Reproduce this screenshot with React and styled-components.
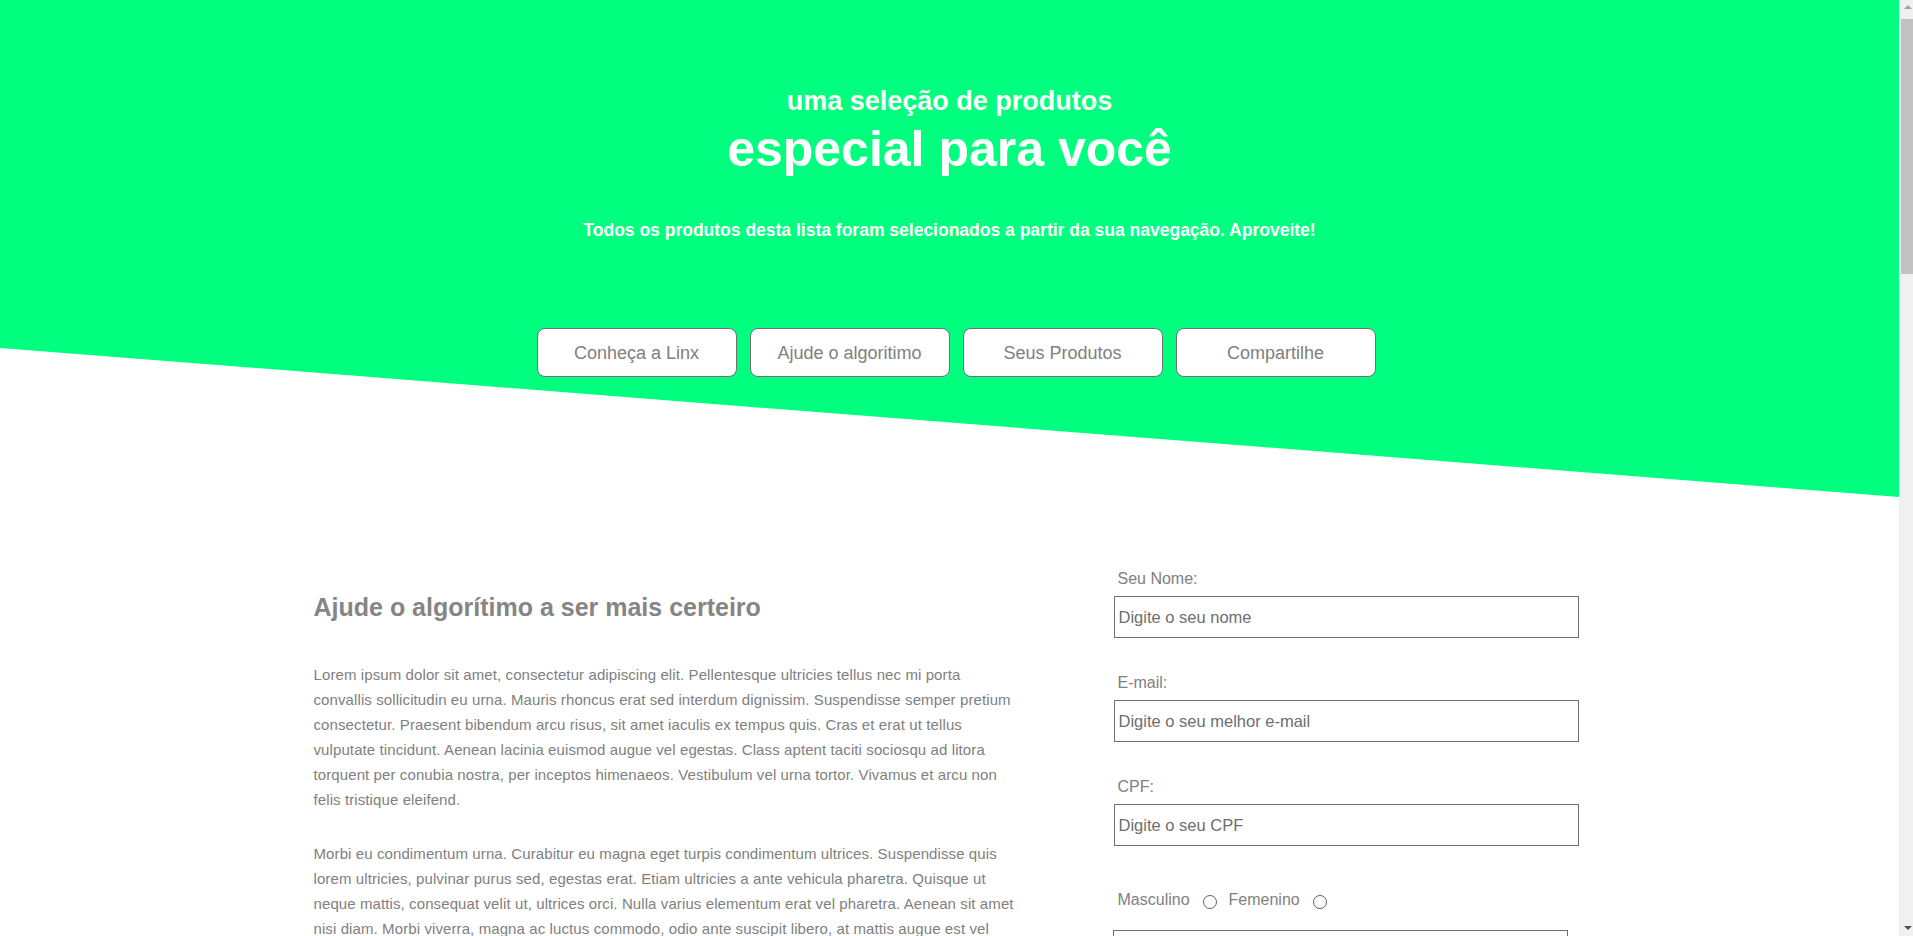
import React, { useEffect, useRef, useState } from 'react';
import styled, { createGlobalStyle } from 'styled-components';

const GlobalStyle = createGlobalStyle`
    * {
        box-sizing: border-box;
    }
    body {
        margin: 0;
        overflow: hidden;
        font-family: "Liberation Sans", Arial, sans-serif;
        background: #fff;
    }
`;

const Page = styled.div`
    display: flex;
    height: 100vh;
`;

const Scroller = styled.div`
    flex: 1;
    min-width: 0;
    overflow-y: auto;
    scrollbar-width: none;
    &::-webkit-scrollbar {
        display: none;
    }
`;

const Rail = styled.div`
    display: flex;
    flex-direction: column;
    flex-shrink: 0;
    width: 14px;
    background: #f0f0f0;
`;

const RailButton = styled.div`
    display: flex;
    align-items: center;
    justify-content: center;
    height: 17px;
    padding-left: 4px;
    &::before {
        content: '';
        border-left: 4px solid transparent;
        border-right: 4px solid transparent;
        ${props => props.down
            ? 'border-top: 4px solid #505050;'
            : 'border-bottom: 4px solid #a3a3a3; margin-top: -3px;'}
    }
`;

const Track = styled.div`
    flex: 1;
    padding-top: 2px;
`;

const Thumb = styled.div`
    width: 12px;
    margin-left: 2px;
    background: #c1c1c1;
`;

const Header = styled.header`
    height: 497px;
    background-color: #00ff7f;
    clip-path: polygon(0 0, 100% 0, 100% 100%, 0 70%);
    display: flex;
    flex-direction: column;
    align-items: center;
    color: #fff;
    text-align: center;
`;

const Kicker = styled.h3`
    margin: 86px 0 0;
    font-size: 27px;
    line-height: 30px;
    font-weight: bold;
`;

const Title = styled.h1`
    margin: 5px 0 0;
    font-size: 50px;
    line-height: 56px;
    font-weight: bold;
`;

const Lead = styled.p`
    margin: 43px 0 0;
    font-size: 17.5px;
    line-height: 20px;
    font-weight: bold;
`;

const Nav = styled.nav`
    display: flex;
    margin-top: 88px;
`;

const NavButton = styled.a`
    display: flex;
    align-items: center;
    justify-content: center;
    width: 200px;
    height: 49px;
    margin-left: 13px;
    padding-top: 2px;
    background: #fff;
    border: 1px solid #707070;
    border-radius: 8px;
    color: #808080;
    font-size: 18px;
    text-decoration: none;
    cursor: pointer;
`;

const Main = styled.main`
    display: grid;
    grid-template-columns: 700px 472px;
    column-gap: 100px;
    width: 1272px;
    margin: 0 auto;
    padding-top: 73px;
    align-items: start;
`;

const Article = styled.article`
    color: #808080;
`;

const Heading = styled.h2`
    margin: 22px 0 0;
    font-size: 25px;
    line-height: 30px;
    font-weight: bold;
    color: #858585;
`;

const Text = styled.p`
    width: 705px;
    margin: ${props => props.first ? '40px' : '29px'} 0 0;
    font-size: 15px;
    letter-spacing: 0.1px;
    line-height: 25px;
`;

const Form = styled.form`
    display: flex;
    flex-direction: column;
`;

const Field = styled.div`
    display: flex;
    flex-direction: column;
    margin-bottom: 36px;
`;

const Label = styled.label`
    padding-left: 4px;
    font-size: 16px;
    line-height: 18px;
    color: #808080;
    margin-bottom: 8px;
`;

const Input = styled.input`
    width: 465px;
    height: 42px;
    padding: 0 4px;
    border: 1px solid #707070;
    border-radius: 0;
    font-family: "Liberation Sans", Arial, sans-serif;
    font-size: 16.5px;
    color: #555;
    outline: none;
    &::placeholder {
        color: #6e6e6e;
    }
`;

const RadioRow = styled.div`
    display: flex;
    align-items: center;
    padding-left: 4px;
    margin-top: 9px;
    font-size: 16px;
    line-height: 18px;
    color: #808080;
`;

const Radio = styled.input.attrs({ type: 'radio' })`
    appearance: none;
    width: 14px;
    height: 14px;
    margin: 4px 12px 0 13px;
    border: 1px solid #606060;
    border-radius: 50%;
    background: #fff;
    &:checked {
        background: radial-gradient(circle, #606060 40%, #fff 45%);
    }
`;

const Message = styled.textarea`
    width: 455px;
    height: 140px;
    margin: 21px 0 0 -1px;
    border: 1px solid #707070;
    padding: 6px;
    font-family: "Liberation Sans", Arial, sans-serif;
    font-size: 16px;
    resize: none;
`;

const Submit = styled.button`
    width: 200px;
    height: 49px;
    margin-top: 24px;
    background: #fff;
    border: 1px solid #707070;
    border-radius: 8px;
    color: #808080;
    font-family: "Liberation Sans", Arial, sans-serif;
    font-size: 18px;
`;

const Products = styled.section`
    width: 1272px;
    margin: 120px auto 0;
    padding-bottom: 120px;
`;

const ProductsTitle = styled.h2`
    margin: 0 0 40px;
    font-size: 25px;
    color: #858585;
    text-align: center;
`;

const Grid = styled.div`
    display: grid;
    grid-template-columns: repeat(4, 1fr);
    gap: 40px 24px;
`;

const Card = styled.div`
    display: flex;
    flex-direction: column;
    gap: 8px;
    color: #808080;
    font-size: 14px;
`;

const Picture = styled.div`
    height: 260px;
    background: #eaeaea;
    border-radius: 4px;
`;

const Name = styled.h4`
    margin: 6px 0 0;
    font-size: 16px;
    color: #666;
`;

const OldPrice = styled.span`
    text-decoration: line-through;
    font-size: 13px;
`;

const Price = styled.strong`
    font-size: 20px;
    color: #555;
`;

const Buy = styled.button`
    height: 40px;
    background: #fff;
    border: 1px solid #707070;
    border-radius: 8px;
    color: #808080;
    font-size: 16px;
`;

const products = Array.from({ length: 16 }, (_, i) => ({
    id: i + 1,
    name: `Nome do Produto ${i + 1}`,
    description: 'Descrição do produto. Lorem ipsum dolor sit amet, consectetur adipiscing elit.',
    oldPrice: 'De: R$ 23,99',
    price: 'Por: R$ 19,99',
}));

const App = () => {
    const scrollRef = useRef(null);
    const trackRef = useRef(null);
    const [thumb, setThumb] = useState({ top: 0, size: 0 });

    useEffect(() => {
        const el = scrollRef.current;
        const update = () => {
            const track = trackRef.current.clientHeight - 2;
            const size = Math.max(20, track * el.clientHeight / el.scrollHeight);
            const range = el.scrollHeight - el.clientHeight;
            const top = range > 0 ? (track - size) * el.scrollTop / range : 0;
            setThumb({ top, size });
        };
        update();
        el.addEventListener('scroll', update);
        window.addEventListener('resize', update);
        return () => {
            el.removeEventListener('scroll', update);
            window.removeEventListener('resize', update);
        };
    }, []);

    return (
        <Page>
            <GlobalStyle />
            <Scroller ref={scrollRef}>
                <Header>
                    <Kicker>uma seleção de produtos</Kicker>
                    <Title>especial para você</Title>
                    <Lead>Todos os produtos desta lista foram selecionados a partir da sua navegação. Aproveite!</Lead>
                    <Nav>
                        <NavButton>Conheça a Linx</NavButton>
                        <NavButton>Ajude o algoritimo</NavButton>
                        <NavButton>Seus Produtos</NavButton>
                        <NavButton>Compartilhe</NavButton>
                    </Nav>
                </Header>

                <Main>
                    <Article>
                        <Heading>Ajude o algorítimo a ser mais certeiro</Heading>
                        <Text first>
                            Lorem ipsum dolor sit amet, consectetur adipiscing elit. Pellentesque ultricies tellus nec mi porta convallis sollicitudin eu urna. Mauris rhoncus erat sed interdum dignissim. Suspendisse semper pretium consectetur. Praesent bibendum arcu risus, sit amet iaculis ex tempus quis. Cras et erat ut tellus vulputate tincidunt. Aenean lacinia euismod augue vel egestas. Class aptent taciti sociosqu ad litora torquent per conubia nostra, per inceptos himenaeos. Vestibulum vel urna tortor. Vivamus et arcu non felis tristique eleifend.
                        </Text>
                        <Text>
                            Morbi eu condimentum urna. Curabitur eu magna eget turpis condimentum ultrices. Suspendisse quis lorem ultricies, pulvinar purus sed, egestas erat. Etiam ultricies a ante vehicula pharetra. Quisque ut neque mattis, consequat velit ut, ultrices orci. Nulla varius elementum erat vel pharetra. Aenean sit amet nisi diam. Morbi viverra, magna ac luctus commodo, odio ante suscipit libero, at mattis augue est vel lectus. Sed in dui vitae nisl tempor facilisis.
                        </Text>
                    </Article>

                    <Form>
                        <Field>
                            <Label htmlFor="nome">Seu Nome:</Label>
                            <Input id="nome" type="text" placeholder="Digite o seu nome" />
                        </Field>
                        <Field>
                            <Label htmlFor="email">E-mail:</Label>
                            <Input id="email" type="email" placeholder="Digite o seu melhor e-mail" />
                        </Field>
                        <Field>
                            <Label htmlFor="cpf">CPF:</Label>
                            <Input id="cpf" type="text" placeholder="Digite o seu CPF" />
                        </Field>
                        <RadioRow>
                            Masculino
                            <Radio name="sexo" value="m" />
                            Femenino
                            <Radio name="sexo" value="f" />
                        </RadioRow>
                        <Message />
                        <Submit type="button">Enviar</Submit>
                    </Form>
                </Main>

                <Products>
                    <ProductsTitle>Sua seleção especial</ProductsTitle>
                    <Grid>
                        {products.map(p => (
                            <Card key={p.id}>
                                <Picture />
                                <Name>{p.name}</Name>
                                <span>{p.description}</span>
                                <OldPrice>{p.oldPrice}</OldPrice>
                                <Price>{p.price}</Price>
                                <Buy>Comprar</Buy>
                            </Card>
                        ))}
                    </Grid>
                </Products>
            </Scroller>

            <Rail>
                <RailButton />
                <Track ref={trackRef}>
                    <Thumb style={{ marginTop: thumb.top, height: thumb.size }} />
                </Track>
                <RailButton down />
            </Rail>
        </Page>
    );
};

export default App;
